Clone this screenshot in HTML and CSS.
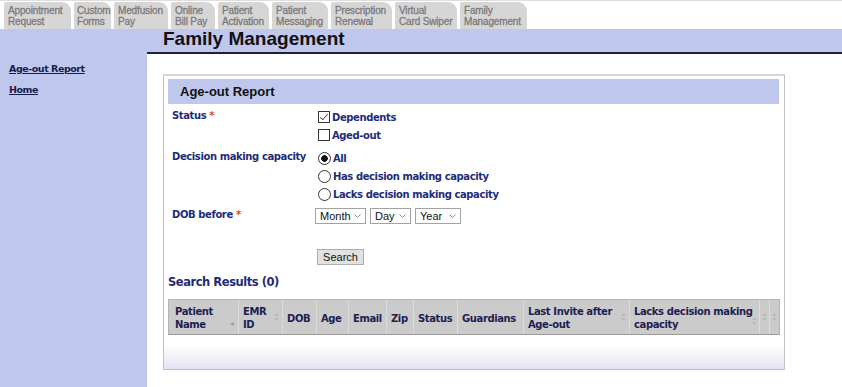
FILE: index.html
```html
<!DOCTYPE html>
<html lang="en">
<head>
<meta charset="utf-8">
<title>Family Management</title>
<link rel="stylesheet" href="styles.css">
</head>
<body>
<div class="tabs">
  <div class="tab">Appointment<br>Request</div>
  <div class="tab">Custom<br>Forms</div>
  <div class="tab">Medfusion<br>Pay</div>
  <div class="tab">Online<br>Bill Pay</div>
  <div class="tab">Patient<br>Activation</div>
  <div class="tab">Patient<br>Messaging</div>
  <div class="tab">Prescription<br>Renewal</div>
  <div class="tab">Virtual<br>Card Swiper</div>
  <div class="tab">Family<br>Management</div>
</div>
<div class="layout">
  <nav class="sidebar">
    <a href="#" class="side-link">Age-out Report</a>
    <a href="#" class="side-link">Home</a>
  </nav>
  <main class="main">
    <h1 class="page-title">Family Management</h1>
    <section class="panel">
      <h2 class="panel-title">Age-out Report</h2>
      <div class="form">
        <div class="form-row row-status">
          <div class="label">Status <span class="req">*</span></div>
          <div class="controls">
            <label class="opt"><input type="checkbox" class="cb" checked>Dependents</label>
            <label class="opt"><input type="checkbox" class="cb">Aged-out</label>
          </div>
        </div>
        <div class="form-row row-decision">
          <div class="label">Decision making capacity</div>
          <div class="controls">
            <label class="opt"><input type="radio" name="dmc" class="rb" checked>All</label>
            <label class="opt"><input type="radio" name="dmc" class="rb">Has decision making capacity</label>
            <label class="opt"><input type="radio" name="dmc" class="rb">Lacks decision making capacity</label>
          </div>
        </div>
        <div class="form-row row-dob">
          <div class="label">DOB before <span class="req">*</span></div>
          <div class="controls selects">
            <span class="select-wrap"><select class="sel sel-month"><option>Month</option></select><svg class="chev" width="7" height="4" viewBox="0 0 7 4"><path d="M0.5 0.5 L3.5 3.5 L6.5 0.5" fill="none" stroke="#8a8a8a" stroke-width="1"/></svg></span>
            <span class="select-wrap"><select class="sel sel-day"><option>Day</option></select><svg class="chev" width="7" height="4" viewBox="0 0 7 4"><path d="M0.5 0.5 L3.5 3.5 L6.5 0.5" fill="none" stroke="#8a8a8a" stroke-width="1"/></svg></span>
            <span class="select-wrap"><select class="sel sel-year"><option>Year</option></select><svg class="chev" width="7" height="4" viewBox="0 0 7 4"><path d="M0.5 0.5 L3.5 3.5 L6.5 0.5" fill="none" stroke="#8a8a8a" stroke-width="1"/></svg></span>
          </div>
        </div>
        <div class="form-row row-button">
          <div class="label"></div>
          <div class="controls"><button type="button" class="btn">Search</button></div>
        </div>
      </div>
      <h3 class="results-title">Search Results (0)</h3>
      <table class="grid">
        <colgroup>
          <col class="c1"><col class="c2"><col class="c3"><col class="c4"><col class="c5"><col class="c6">
          <col class="c7"><col class="c8"><col class="c9"><col class="c10"><col class="c11"><col class="c12">
        </colgroup>
        <thead>
          <tr>
            <th>Patient<br>Name<svg class="sort sort-down" width="5" height="3" viewBox="0 0 5 3"><path d="M0 0 H5 L2.5 3 Z" fill="#9a9a9a"/></svg></th>
            <th>EMR<br>ID<svg class="sort sort-both" width="5" height="8" viewBox="0 0 5 8"><path d="M0 3 H5 L2.5 0 Z M0 5 H5 L2.5 8 Z" fill="#b9b9b9"/></svg></th>
            <th>DOB</th>
            <th>Age</th>
            <th>Email</th>
            <th>Zip</th>
            <th>Status</th>
            <th>Guardians</th>
            <th>Last Invite after<br>Age-out<svg class="sort sort-both" width="5" height="8" viewBox="0 0 5 8"><path d="M0 3 H5 L2.5 0 Z M0 5 H5 L2.5 8 Z" fill="#b9b9b9"/></svg></th>
            <th>Lacks decision making<br>capacity<svg class="sort sort-both sort-tight" width="5" height="8" viewBox="0 0 5 8"><path d="M0 3 H5 L2.5 0 Z M0 5 H5 L2.5 8 Z" fill="#b9b9b9"/></svg></th>
            <th class="tiny"><svg class="sort sort-both" width="5" height="8" viewBox="0 0 5 8"><path d="M0 3 H5 L2.5 0 Z M0 5 H5 L2.5 8 Z" fill="#b9b9b9"/></svg></th>
            <th class="tiny"><svg class="sort sort-both" width="5" height="8" viewBox="0 0 5 8"><path d="M0 3 H5 L2.5 0 Z M0 5 H5 L2.5 8 Z" fill="#b9b9b9"/></svg></th>
          </tr>
        </thead>
      </table>
    </section>
  </main>
</div>
</body>
</html>
```
FILE: styles.css
```css
html, body {
  margin: 0;
  padding: 0;
  background: #fff;
}
body {
  font-family: "DejaVu Sans", Verdana, sans-serif;
  min-height: 100vh;
  display: flex;
  flex-direction: column;
}

/* ---------- tabs ---------- */
.tabs {
  display: flex;
  gap: 3px;
  height: 27px;
  padding: 1px 0 0 4px;
  border-top: 1px solid #dedede;
  flex: none;
}
.tab {
  box-sizing: border-box;
  height: 27px;
  padding: 3px 0 0 4px;
  background: #d6d6d6;
  color: #7a7a7a;
  font: 10px/11px "Liberation Sans", Arial, sans-serif;
  letter-spacing: -0.15px;
  -webkit-text-stroke: 0.3px #7a7a7a;
  white-space: nowrap;
  border-radius: 2px 9px 0 0;
}
.tab:nth-child(1) { width: 67px; }
.tab:nth-child(2) { width: 37px; padding-left: 3px; }
.tab:nth-child(3) { width: 54px; }
.tab:nth-child(4) { width: 44px; }
.tab:nth-child(5) { width: 51px; }
.tab:nth-child(6) { width: 56px; }
.tab:nth-child(7) { width: 61px; }
.tab:nth-child(8) { width: 62px; }
.tab:nth-child(9) { width: 67px; }

/* ---------- layout ---------- */
.layout {
  display: flex;
  flex: 1;
}
.sidebar {
  width: 147px;
  flex: none;
  box-sizing: border-box;
  background: #bfc7ec;
  padding: 33px 0 0 9px;
  display: flex;
  flex-direction: column;
  align-items: flex-start;
  gap: 8px;
}
.side-link {
  font-weight: bold;
  font-size: 9.5px;
  line-height: 13px;
  letter-spacing: -0.45px;
  color: #161c4e;
  text-decoration: underline;
}
.main {
  flex: 1;
  min-width: 0;
}
.page-title {
  margin: 0;
  height: 23px;
  padding-left: 16px;
  background: #bfc7ec;
  border-bottom: 2px solid #1d1f40;
  font: bold 19px/20px "Liberation Sans", Arial, sans-serif;
  color: #111;
}

/* ---------- panel ---------- */
.panel {
  box-sizing: border-box;
  width: 622px;
  margin: 20px 0 0 16px;
  padding: 3px 5px 34px 4px;
  border: 1px solid #c2c2c2;
  border-top: 2px solid #d6d6d6;
  background: linear-gradient(#fff calc(100% - 24px), #e3e3f3);
}
.panel-title {
  margin: 0;
  height: 25px;
  padding-left: 12px;
  background: #bfc7ec;
  font: bold 13px/25px "Liberation Sans", Arial, sans-serif;
  color: #111;
}

/* ---------- form ---------- */
.form-row {
  display: flex;
  align-items: flex-start;
}
.row-status { margin-top: 4px; }
.row-decision { margin-top: 5px; }
.row-dob { margin-top: 4px; }
.row-button { margin-top: 25px; }
.label {
  width: 143px;
  flex: none;
  padding-left: 4px;
  font-weight: bold;
  font-size: 10px;
  line-height: 15px;
  letter-spacing: -0.4px;
  color: #1e2b78;
}
.req {
  color: #e4461f;
}
.controls {
  display: flex;
  flex-direction: column;
}
.opt {
  display: flex;
  align-items: center;
  height: 18px;
  font-weight: bold;
  font-size: 10px;
  letter-spacing: -0.4px;
  color: #1e2b78;
}
.cb {
  appearance: none;
  -webkit-appearance: none;
  box-sizing: border-box;
  width: 12px;
  height: 12px;
  margin: 0 2px 0 3px;
  border: 1px solid #333;
  background: #fff;
  position: relative;
}
.cb:checked::after {
  content: "";
  position: absolute;
  left: 3px;
  top: 0;
  width: 3px;
  height: 7px;
  border: solid #555;
  border-width: 0 1.3px 1.3px 0;
  transform: rotate(42deg);
}
.rb {
  appearance: none;
  -webkit-appearance: none;
  box-sizing: border-box;
  width: 13px;
  height: 13px;
  margin: 0 2px 0 3px;
  border: 1px solid #333;
  border-radius: 50%;
  background: #fff;
}
.rb:checked {
  background: radial-gradient(circle, #111 0 3px, #fff 3.6px);
}
.selects {
  flex-direction: row;
  gap: 4px;
  padding-top: 1px;
}
.select-wrap {
  position: relative;
  display: flex;
}
.sel {
  appearance: none;
  -webkit-appearance: none;
  box-sizing: border-box;
  height: 16px;
  margin: 0;
  padding: 0 0 0 4px;
  border: 1px solid #a2a2a2;
  border-radius: 0;
  background: #fff;
  font: 11px/14px "Liberation Sans", Arial, sans-serif;
  color: #111;
}
.sel-month { width: 51px; }
.sel-day { width: 41px; }
.sel-year { width: 46px; }
.chev {
  position: absolute;
  right: 5px;
  top: 6px;
  pointer-events: none;
}
.btn {
  display: block;
  box-sizing: border-box;
  width: 47px;
  height: 16px;
  margin: 0 0 0 2px;
  padding: 0;
  border: 1px solid #adadad;
  border-radius: 0;
  background: #e1e1e1;
  font: 11px/14px "Liberation Sans", Arial, sans-serif;
  color: #111;
}

/* ---------- results ---------- */
.results-title {
  margin: 10px 0 10px;
  font-weight: bold;
  font-size: 11.5px;
  line-height: 14px;
  letter-spacing: -0.45px;
  color: #1e2b78;
}
.grid {
  width: 611px;
  table-layout: fixed;
  border-collapse: collapse;
}
.c1 { width: 70px; }
.c2 { width: 44px; }
.c3 { width: 34px; }
.c4 { width: 32px; }
.c5 { width: 38px; }
.c6 { width: 27px; }
.c7 { width: 44px; }
.c8 { width: 66px; }
.c9 { width: 106px; }
.c10 { width: 130px; }
.c11 { width: 10px; }
.c12 { width: 10px; }
.grid th {
  position: relative;
  height: 25px;
  padding: 5px 2px 3px 4px;
  background: #cbcbcb;
  border-top: 1px solid #b4b4b4;
  border-bottom: 1px solid #9c9c9c;
  border-left: 1px solid #dcdcdc;
  text-align: left;
  vertical-align: middle;
  white-space: nowrap;
  font-weight: bold;
  font-size: 10px;
  line-height: 13px;
  letter-spacing: -0.4px;
  color: #1b2152;
}
.grid th:first-child {
  padding-left: 6px;
  border-left: 1px solid #b4b4b4;
}
.grid th:last-child {
  border-right: 1px solid #b4b4b4;
}
.grid th.tiny {
  padding: 0;
}
.sort {
  position: absolute;
  right: 3px;
}
.sort-down {
  top: 23px;
}
.sort-both {
  top: 13px;
}
.sort-tight {
  top: 17px;
  right: 2px;
}
.tiny .sort {
  right: 2px;
}
```
